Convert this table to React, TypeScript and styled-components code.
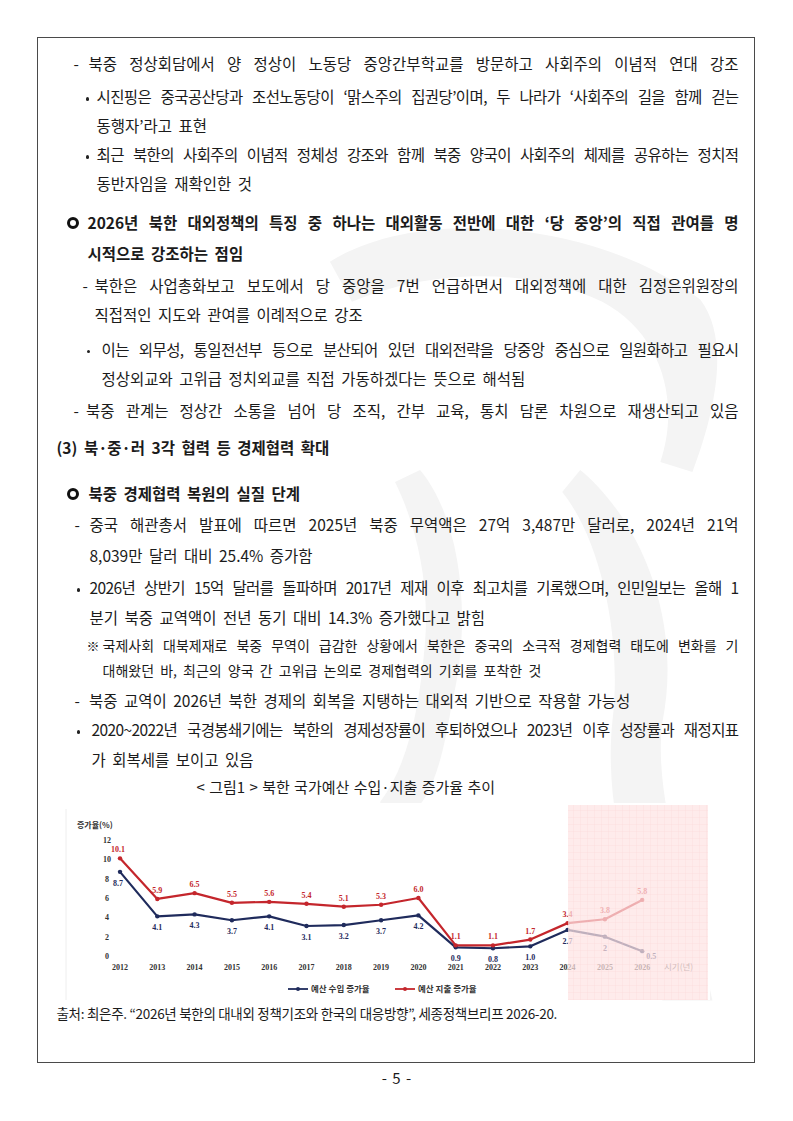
import styled, { createGlobalStyle, css } from "styled-components";

const GlobalStyle = createGlobalStyle`
    html, body {
        margin: 0;
        padding: 0;
        background: #fff;
    }
    body {
        font-family: "Noto Sans CJK KR", "Noto Sans", sans-serif;
        color: #1b1b1b;
    }
`;

const Sheet = styled.div`
    width: 793px;
    min-height: 1121px;
    padding-top: 37px;
    box-sizing: border-box;
`;

const Frame = styled.div`
    position: relative;
    margin-left: 37px;
    width: 718px;
    height: 1026px;
    box-sizing: border-box;
    border: 1.5px solid #4a4a4a;
    padding: 11px 15.5px 0 18px;
`;

const Watermark = styled.svg`
    position: absolute;
    inset: 0;
    width: 100%;
    height: 100%;
    z-index: 0;
    pointer-events: none;
`;

const Item = styled.div<{ $at: number; $top?: number; $lh?: number; $size?: number; $bold?: boolean }>`
    position: relative;
    z-index: 1;
    display: flex;
    margin-top: ${(p) => p.$top ?? 0}px;
    padding-left: ${(p) => p.$at}px;
    line-height: ${(p) => p.$lh ?? 29}px;
    font-size: ${(p) => p.$size ?? 15.5}px;
    font-weight: ${(p) => (p.$bold ? 700 : 400)};
`;

const Mark = styled.span<{ $w: number }>`
    flex: none;
    width: ${(p) => p.$w}px;
`;

const DotMark = styled(Mark)`
    &::before {
        content: "";
        display: inline-block;
        width: 3.5px;
        height: 3.5px;
        border-radius: 50%;
        background: #222;
        vertical-align: middle;
    }
`;

const RingMark = styled(Mark)`
    &::before {
        content: "";
        display: inline-block;
        box-sizing: border-box;
        width: 12px;
        height: 12px;
        border: 3px solid #111;
        border-radius: 50%;
        vertical-align: middle;
        position: relative;
        top: -1px;
    }
`;

const NoteMark = styled(Mark)`
    font-size: 13px;
`;

const Body = styled.div`
    flex: 1;
    min-width: 0;
`;

// $full: the line is stretched to the right edge; $tight: it also has to be squeezed to fit
const Line = styled.div<{ $full?: boolean; $tight?: boolean }>`
    word-spacing: 3px;
    white-space: nowrap;
    ${(p) =>
        p.$full &&
        css`
            word-spacing: 0;
            white-space: normal;
            text-align: justify;
            text-align-last: justify;
        `}
    ${(p) =>
        p.$tight &&
        css`
            letter-spacing: -0.6px;
        `}
`;

const Caption = styled.div`
    position: relative;
    z-index: 1;
    margin-left: 140.5px;
    font-size: 15px;
    line-height: 26px;
    word-spacing: 1px;
`;

const ChartBox = styled.div`
    position: relative;
    z-index: 1;
    margin: 3px 0 0 5.5px;
    width: 648px;
    height: 197px;
    background: #fff;
`;

const Source = styled.div`
    position: relative;
    z-index: 1;
    margin: 1px 0 0 0.5px;
    font-size: 13.5px;
    line-height: 24px;
    letter-spacing: -0.3px;
`;

const PageNo = styled.div`
    margin-top: 4px;
    text-align: center;
    font-size: 15px;
    line-height: 22px;
    word-spacing: 2px;
`;

const years = [2012, 2013, 2014, 2015, 2016, 2017, 2018, 2019, 2020, 2021, 2022, 2023, 2024, 2025, 2026];
const income = ["8.7", "4.1", "4.3", "3.7", "4.1", "3.1", "3.2", "3.7", "4.2", "0.9", "0.8", "1.0", "2.7", "2", "0.5"];
const spend = ["10.1", "5.9", "6.5", "5.5", "5.6", "5.4", "5.1", "5.3", "6.0", "1.1", "1.1", "1.7", "3.4", "3.8", "5.8"];

const X = (i: number) => 58 + 37.3 * i;
const Y = (v: number) => 153 - 9.67 * v;

const NAVY = "#1f2b5c";
const RED = "#c4262c";

const BudgetChart = () => {
    const pts = (vals: string[]) => vals.map((v, i) => `${X(i)},${Y(parseFloat(v))}`).join(" ");
    return (
        <svg width="648" height="197" viewBox="0 0 648 197">
            <defs>
                <pattern id="grid" width="7" height="7" patternUnits="userSpaceOnUse">
                    <path d="M7 0H0V7" fill="none" stroke="#f3c2c2" strokeWidth="0.6" />
                </pattern>
            </defs>
            <line x1="4" y1="6" x2="4" y2="197" stroke="#eeeeee" strokeWidth="1" />
            <text x="15" y="25" fontSize="8" fontWeight="700" fill="#333" fontFamily="Noto Sans CJK KR, sans-serif">
                증가율(%)
            </text>
            {[0, 2, 4, 6, 8, 10, 12].map((v) => (
                <text
                    key={v}
                    x="45"
                    y={Y(v) + 3}
                    fontSize="8"
                    fontWeight="700"
                    textAnchor="middle"
                    fill="#333"
                    fontFamily="Liberation Serif, serif"
                >
                    {v}
                </text>
            ))}
            {years.map((y, i) => (
                <text
                    key={y}
                    x={X(i)}
                    y="167"
                    fontSize="8"
                    fontWeight="700"
                    textAnchor="middle"
                    fill="#333"
                    fontFamily="Liberation Serif, serif"
                >
                    {y}
                </text>
            ))}
            <text x="602" y="167" fontSize="8.5" fill="#555" fontFamily="Noto Sans CJK KR, sans-serif">
                시기(년)
            </text>

            <polyline points={pts(income)} fill="none" stroke={NAVY} strokeWidth="2.2" strokeLinejoin="round" />
            <polyline points={pts(spend)} fill="none" stroke={RED} strokeWidth="2.2" strokeLinejoin="round" />
            {income.map((v, i) => (
                <circle key={`i${i}`} cx={X(i)} cy={Y(parseFloat(v))} r="2.2" fill={NAVY} />
            ))}
            {spend.map((v, i) => (
                <circle key={`s${i}`} cx={X(i)} cy={Y(parseFloat(v))} r="2.2" fill={RED} />
            ))}
            {income.map((v, i) => (
                <text
                    key={`il${i}`}
                    x={X(i) + (i === 0 ? -2 : i === 14 ? 9 : 0)}
                    y={Y(parseFloat(v)) + (i === 14 ? 8 : 14)}
                    fontSize="8"
                    fontWeight="700"
                    textAnchor="middle"
                    fill={NAVY}
                    fontFamily="Liberation Serif, serif"
                >
                    {v}
                </text>
            ))}
            {spend.map((v, i) => (
                <text
                    key={`sl${i}`}
                    x={X(i) + (i === 0 ? -2 : 0)}
                    y={Y(parseFloat(v)) - 6}
                    fontSize="8"
                    fontWeight="700"
                    textAnchor="middle"
                    fill={RED}
                    fontFamily="Liberation Serif, serif"
                >
                    {v}
                </text>
            ))}

            <rect x="506" y="2" width="140" height="195" fill="#fde3e3" opacity="0.72" />
            <rect x="506" y="2" width="140" height="195" fill="url(#grid)" opacity="0.5" />

            <line x1="226" y1="186" x2="246" y2="186" stroke={NAVY} strokeWidth="1.8" />
            <circle cx="236" cy="186" r="2" fill={NAVY} />
            <text x="249" y="189" fontSize="8.5" fontWeight="700" fill="#333" fontFamily="Noto Sans CJK KR, sans-serif">
                예산 수입 증가율
            </text>
            <line x1="333" y1="186" x2="353" y2="186" stroke={RED} strokeWidth="1.8" />
            <circle cx="343" cy="186" r="2" fill={RED} />
            <text x="356" y="189" fontSize="8.5" fontWeight="700" fill="#333" fontFamily="Noto Sans CJK KR, sans-serif">
                예산 지출 증가율
            </text>
        </svg>
    );
};

const App = () => {
    return (
        <Sheet>
            <GlobalStyle />
            <Frame>
                {/* faint calligraphy watermark behind the text */}
                <Watermark viewBox="38.5 38.5 715 1023" preserveAspectRatio="none">
                    <g fill="#f4f4f4">
                        <path d="M330 262 C420 205 600 222 700 300 C732 342 712 420 692 472 L660 462 C680 402 662 334 602 302 C522 264 422 272 352 302 Z" />
                        <path d="M420 470 C462 520 472 622 452 702 C442 762 432 802 402 822 L380 802 C410 762 420 702 425 642 C430 582 415 522 395 482 Z" />
                        <path d="M580 470 C642 522 682 622 662 722 C652 802 692 902 712 1000 L662 1000 C642 922 602 822 612 722 C622 642 602 542 562 492 Z" />
                    </g>
                </Watermark>

                <Item $at={17.5}>
                    <Mark $w={15}>-</Mark>
                    <Body>
                        <Line $full>북중 정상회담에서 양 정상이 노동당 중앙간부학교를 방문하고 사회주의 이념적 연대 강조</Line>
                    </Body>
                </Item>
                <Item $at={29.5} $top={4}>
                    <DotMark $w={11} />
                    <Body>
                        <Line $full $tight>시진핑은 중국공산당과 조선노동당이 ‘맑스주의 집권당’이며, 두 나라가 ‘사회주의 길을 함께 걷는</Line>
                        <Line>동행자’라고 표현</Line>
                    </Body>
                </Item>
                <Item $at={29.5}>
                    <DotMark $w={11} />
                    <Body>
                        <Line $full $tight>최근 북한의 사회주의 이념적 정체성 강조와 함께 북중 양국이 사회주의 체제를 공유하는 정치적</Line>
                        <Line>동반자임을 재확인한 것</Line>
                    </Body>
                </Item>

                <Item $at={10.5} $top={8.5} $lh={31} $bold>
                    <RingMark $w={21} />
                    <Body>
                        <Line $full>2026년 북한 대외정책의 특징 중 하나는 대외활동 전반에 대한 ‘당 중앙’의 직접 관여를 명</Line>
                        <Line>시적으로 강조하는 점임</Line>
                    </Body>
                </Item>
                <Item $at={26.5} $top={2}>
                    <Mark $w={12}>-</Mark>
                    <Body>
                        <Line $full>북한은 사업총화보고 보도에서 당 중앙을 7번 언급하면서 대외정책에 대한 김정은위원장의</Line>
                        <Line>직접적인 지도와 관여를 이례적으로 강조</Line>
                    </Body>
                </Item>
                <Item $at={30.5} $top={6}>
                    <DotMark $w={15} />
                    <Body>
                        <Line $full $tight>이는 외무성, 통일전선부 등으로 분산되어 있던 대외전략을 당중앙 중심으로 일원화하고 필요시</Line>
                        <Line>정상외교와 고위급 정치외교를 직접 가동하겠다는 뜻으로 해석됨</Line>
                    </Body>
                </Item>
                <Item $at={17.5} $top={3}>
                    <Mark $w={12.5}>-</Mark>
                    <Body>
                        <Line $full>북중 관계는 정상간 소통을 넘어 당 조직, 간부 교육, 통치 담론 차원으로 재생산되고 있음</Line>
                    </Body>
                </Item>

                <Item $at={0.5} $top={8} $bold>
                    <Body>
                        <Line>(3) 북·중·러 3각 협력 등 경제협력 확대</Line>
                    </Body>
                </Item>

                <Item $at={10.5} $top={16} $lh={31} $bold>
                    <RingMark $w={22} />
                    <Body>
                        <Line>북중 경제협력 복원의 실질 단계</Line>
                    </Body>
                </Item>
                <Item $at={18.5} $lh={31}>
                    <Mark $w={15}>-</Mark>
                    <Body>
                        <Line $full>중국 해관총서 발표에 따르면 2025년 북중 무역액은 27억 3,487만 달러로, 2024년 21억</Line>
                        <Line>8,039만 달러 대비 25.4% 증가함</Line>
                    </Body>
                </Item>
                <Item $at={20.5} $top={1.5} $lh={30}>
                    <DotMark $w={13} />
                    <Body>
                        <Line $full $tight>2026년 상반기 15억 달러를 돌파하며 2017년 제재 이후 최고치를 기록했으며, 인민일보는 올해 1</Line>
                        <Line>분기 북중 교역액이 전년 동기 대비 14.3% 증가했다고 밝힘</Line>
                    </Body>
                </Item>
                <Item $at={30.5} $top={0.5} $lh={25} $size={14}>
                    <NoteMark $w={16}>※</NoteMark>
                    <Body>
                        <Line $full>국제사회 대북제재로 북중 무역이 급감한 상황에서 북한은 중국의 소극적 경제협력 태도에 변화를 기</Line>
                        <Line>대해왔던 바, 최근의 양국 간 고위급 논의로 경제협력의 기회를 포착한 것</Line>
                    </Body>
                </Item>
                <Item $at={18.5} $top={3.5} $lh={28}>
                    <Mark $w={14.5}>-</Mark>
                    <Body>
                        <Line>북중 교역이 2026년 북한 경제의 회복을 지탱하는 대외적 기반으로 작용할 가능성</Line>
                    </Body>
                </Item>
                <Item $at={20.5} $lh={30}>
                    <DotMark $w={15} />
                    <Body>
                        <Line $full $tight>2020~2022년 국경봉쇄기에는 북한의 경제성장률이 후퇴하였으나 2023년 이후 성장률과 재정지표</Line>
                        <Line>가 회복세를 보이고 있음</Line>
                    </Body>
                </Item>

                <Caption>&lt; 그림1 &gt; 북한 국가예산 수입·지출 증가율 추이</Caption>
                <ChartBox>
                    <BudgetChart />
                </ChartBox>
                <Source>
                    출처: 최은주. “2026년 북한의 대내외 정책기조와 한국의 대응방향”, 세종정책브리프 2026-20.
                </Source>
            </Frame>
            <PageNo>- 5 -</PageNo>
        </Sheet>
    );
};

export default App;
